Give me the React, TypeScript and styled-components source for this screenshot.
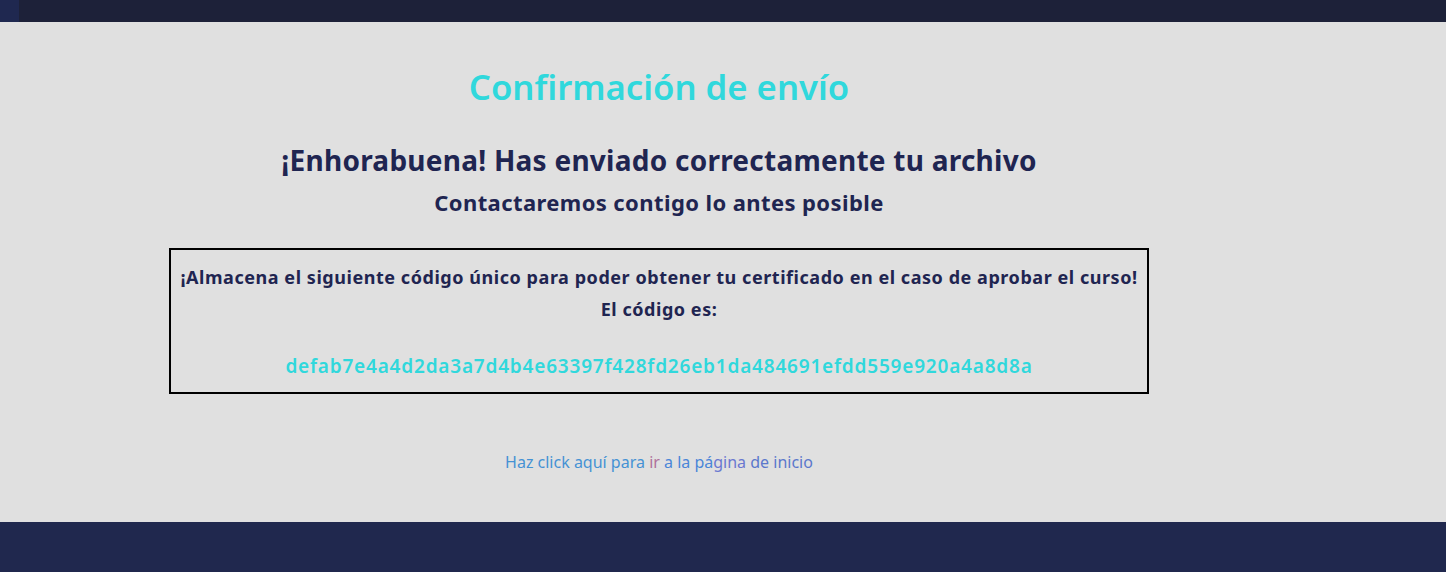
import React from "react";
import styled, { createGlobalStyle } from "styled-components";

const Global = createGlobalStyle`
  html, body { margin: 0; padding: 0; }
  body { background: #e0e0e0; font-family: "Noto Sans", "Liberation Sans", sans-serif; }
`;

const Page = styled.div`
  display: flex;
  flex-direction: column;
  min-height: 572px;
`;

const TopBar = styled.header`
  height: 22px;
  background: #1d2139;
  display: flex;
`;

const TopCorner = styled.div`
  width: 19px;
  height: 100%;
  background: #1f2850;
`;

const Main = styled.main`
  height: 500px;
  background: #e0e0e0;
  padding-left: 169px;
  box-sizing: border-box;
`;

const Column = styled.div`
  width: 980px;
  display: flex;
  flex-direction: column;
  align-items: center;
  text-align: center;
`;

const Title = styled.h1`
  margin: 41px 0 0;
  font-size: 34.7px;
  line-height: 48px;
  font-weight: 600;
  color: #30d8dc;
`;

const Heading = styled.h2`
  margin: 30px 0 0;
  font-size: 28px;
  line-height: 38px;
  font-weight: 700;
  letter-spacing: 0.25px;
  color: #1f2551;
`;

const Sub = styled.h3`
  margin: 8px 0 0;
  font-size: 22px;
  line-height: 30px;
  font-weight: 700;
  letter-spacing: 0.4px;
  color: #1f2551;
`;

const CodeBox = styled.section`
  margin-top: 31px;
  width: 980px;
  height: 146px;
  box-sizing: border-box;
  border: 2px solid #000;
  padding-top: 11px;
  display: flex;
  flex-direction: column;
  align-items: center;
`;

const BoxText = styled.p`
  margin: 0;
  font-size: 18px;
  line-height: 32px;
  font-weight: 700;
  letter-spacing: 0.55px;
  color: #1f2551;
`;

const Code = styled.p`
  margin: 26px 0 0;
  font-size: 19px;
  line-height: 30px;
  font-weight: 600;
  letter-spacing: 0.8px;
  color: #30d8dc;
`;

const HomeLink = styled.a`
  margin-top: 57px;
  font-size: 16px;
  line-height: 22px;
  text-decoration: none;
  color: #4a8fd6;
  cursor: pointer;
`;

const Tint = styled.span<{ $c: string }>`
  color: ${(p) => p.$c};
`;

const Footer = styled.footer`
  height: 50px;
  background: #20284e;
`;

export default function App() {
  return (
    <>
      <Global />
      <Page>
        <TopBar>
          <TopCorner />
        </TopBar>
        <Main>
          <Column>
            <Title>Confirmación de envío</Title>
            <Heading>¡Enhorabuena! Has enviado correctamente tu archivo</Heading>
            <Sub>Contactaremos contigo lo antes posible</Sub>
            <CodeBox>
              <BoxText>
                ¡Almacena el siguiente código único para poder obtener tu certificado en el caso de aprobar el curso!
              </BoxText>
              <BoxText>El código es:</BoxText>
              <Code>defab7e4a4d2da3a7d4b4e63397f428fd26eb1da484691efdd559e920a4a8d8a</Code>
            </CodeBox>
            <HomeLink href="#">
              <Tint $c="#4592d4">Haz click aquí para </Tint>
              <Tint $c="#b0709c">ir</Tint>
              <Tint $c="#4a86d8"> a la pá</Tint>
              <Tint $c="#6a78d0">gina</Tint>
              <Tint $c="#5b78cc"> de inicio</Tint>
            </HomeLink>
          </Column>
        </Main>
        <Footer />
      </Page>
    </>
  );
}
